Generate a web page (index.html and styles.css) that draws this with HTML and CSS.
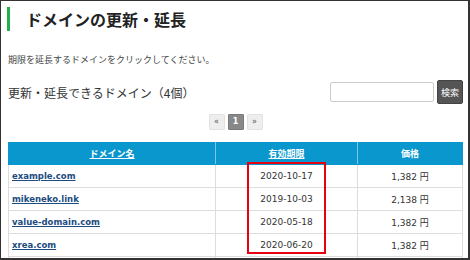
FILE: index.html
```html
<!DOCTYPE html>
<html>
<head>
  <title>ドメインの更新・延長</title>
  <link rel="stylesheet" href="styles.css">
</head>
<body>

  <div class="frame">
    <h1 class="page-title">ドメインの更新・延長</h1>

    <p class="lead">期限を延長するドメインをクリックしてください。</p>

    <div class="list-head">
      <h2>更新・延長できるドメイン（4個）</h2>
      <form class="search" action="javascript:void(0);">
        <input type="text" class="search-box">
        <button type="button" class="search-btn">検索</button>
      </form>
    </div>

    <!-- pager -->
    <ul class="pager">
      <li><a href="#">«</a></li>
      <li class="current"><span>1</span></li>
      <li><a href="#">»</a></li>
    </ul>

    <div class="table-wrap">
      <table class="domains">
        <thead>
          <tr>
            <th class="col-name"><a href="#">ドメイン名</a></th>
            <th class="col-date"><a href="#">有効期限</a></th>
            <th class="col-price">価格</th>
          </tr>
        </thead>
        <tbody>
          <tr>
            <td><a href="#">example.com</a></td>
            <td class="date">2020-10-17</td>
            <td class="price">1,382 円</td>
          </tr>
          <tr>
            <td><a href="#">mikeneko.link</a></td>
            <td class="date">2019-10-03</td>
            <td class="price">2,138 円</td>
          </tr>
          <tr>
            <td><a href="#">value-domain.com</a></td>
            <td class="date">2020-05-18</td>
            <td class="price">1,382 円</td>
          </tr>
          <tr>
            <td><a href="#">xrea.com</a></td>
            <td class="date">2020-06-20</td>
            <td class="price">1,382 円</td>
          </tr>
          <tr class="cut">
            <td>&nbsp;</td>
            <td class="date">&nbsp;</td>
            <td class="price">&nbsp;</td>
          </tr>
        </tbody>
      </table>

      <!-- highlight round the expiry dates -->
      <div class="mark"></div>
    </div>
  </div>

</body>
</html>
```

FILE: styles.css
```css
body {
  margin: 0;
  padding: 0;
  background: #fff;
  font-family: "DejaVu Sans", "Noto Sans CJK JP", sans-serif;
  color: #333;
}

.frame {
  width: 470px;
  height: 260px;
  box-sizing: border-box;
  border-top: 1px solid #333;
  border-left: 1px solid #333;
  border-right: 2px solid #333;
  border-bottom: 2px solid #333;
  padding: 0 5px 0 7px;
  overflow: hidden;
}

.page-title {
  margin: 6px 0 0 -1px;
  padding-left: 16px;
  border-left: 3px solid #21b04b;
  font-family: "Noto Sans CJK JP", sans-serif;
  font-size: 16px;
  font-weight: bold;
  line-height: 24px;
  color: #222;
}

.lead {
  margin: 22px 0 0 0;
  font-family: "Noto Sans CJK JP", sans-serif;
  font-size: 9px;
  line-height: 14px;
  color: #444;
}

.list-head {
  display: flex;
  justify-content: space-between;
  align-items: center;
  margin-top: 13px;
  height: 24px;
}

.list-head h2 {
  margin: 0;
  font-family: "Noto Sans CJK JP", sans-serif;
  font-size: 12px;
  font-weight: normal;
  color: #333;
}

.search {
  display: flex;
  align-items: center;
  gap: 3px;
}

.search-box {
  width: 104px;
  height: 20px;
  box-sizing: border-box;
  border: 1px solid #ccc;
  border-radius: 2px;
  padding: 2px 4px;
}

.search-btn {
  width: 26px;
  height: 24px;
  padding: 0;
  border: 1px solid #444;
  border-radius: 2px;
  background: #555;
  color: #fff;
  font-family: "Noto Sans CJK JP", sans-serif;
  font-size: 9px;
  cursor: pointer;
}

.pager {
  display: flex;
  justify-content: center;
  gap: 3px;
  list-style: none;
  margin: 10px 0 0 0;
  padding: 0;
}

.pager li a,
.pager li span {
  display: block;
  width: 16px;
  height: 16px;
  box-sizing: border-box;
  border: 1px solid #e2e2e2;
  border-radius: 1px;
  background: #eee;
  color: #555;
  font-size: 8px;
  line-height: 14px;
  text-align: center;
  text-decoration: none;
}

.pager li.current span {
  background: #888;
  border-color: #7a7a7a;
  color: #fff;
  font-weight: bold;
}

.table-wrap {
  position: relative;
  margin-top: 12px;
}

.domains {
  width: 455px;
  border-collapse: collapse;
  font-size: 9px;
}

.domains th {
  height: 21px;
  padding: 0;
  background: #0a97cd;
  color: #fff;
  font-weight: bold;
  text-align: center;
  border: 1px solid #0a97cd;
  border-right-color: #7cc6e4;
}

.domains th:last-child {
  border-right-color: #0a97cd;
}

.domains th a {
  color: #fff;
  font-family: "Noto Sans CJK JP", sans-serif;
}

.domains th.col-price {
  font-family: "Noto Sans CJK JP", sans-serif;
}

.col-name { width: 206px; }
.col-date { width: 141px; }

.domains td {
  height: 22px;
  padding: 0 0 0 3px;
  border: 1px solid #ddd;
}

.domains td a {
  color: #1d4c80;
  font-size: 8.5px;
  font-weight: bold;
}

.domains td.date,
.domains td.price {
  padding: 0;
  text-align: center;
  color: #333;
}

.mark {
  position: absolute;
  left: 239px;
  top: 20px;
  width: 79px;
  height: 92px;
  box-sizing: border-box;
  border: 2px solid #e60012;
}
```
